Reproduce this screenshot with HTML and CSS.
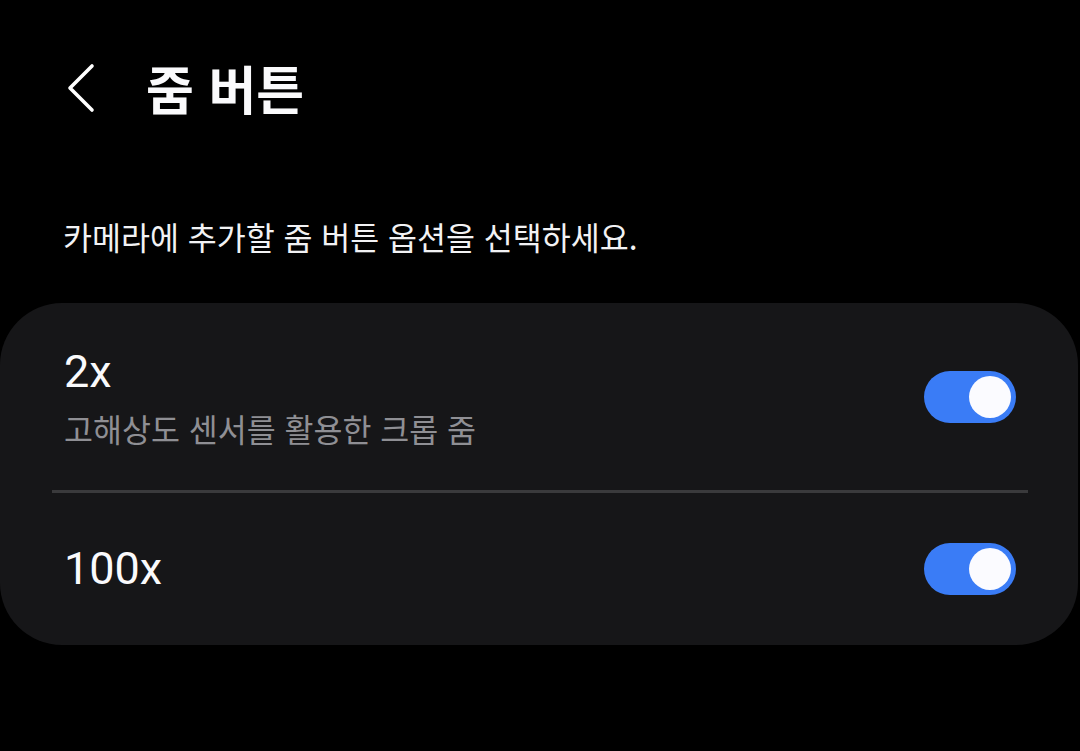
FILE: index.html
```html
<!DOCTYPE html>
<html lang="ko">
<head>
  <meta charset="UTF-8" />
  <meta name="viewport" content="width=device-width, initial-scale=1.0" />
  <title>줌 버튼</title>
  <link rel="stylesheet" href="styles.css">
</head>
<body>
  <header class="top-bar">
    <button class="back-btn" aria-label="뒤로">
      <svg width="30" height="50" viewBox="0 0 30 50">
        <path d="M26 3 L4 25 L26 47" fill="none" stroke="#fff" stroke-width="3.6" stroke-linecap="round" stroke-linejoin="round"/>
      </svg>
    </button>
    <h1>줌 버튼</h1>
  </header>

  <p class="intro">카메라에 추가할 줌 버튼 옵션을 선택하세요.</p>

  <div class="card">
    <div class="row row-first">
      <div class="row-text">
        <div class="row-title">2x</div>
        <div class="row-sub">고해상도 센서를 활용한 크롭 줌</div>
      </div>
      <div class="switch on"><span class="knob"></span></div>
    </div>
    <div class="divider"></div>
    <div class="row row-last">
      <div class="row-text">
        <div class="row-title">100x</div>
      </div>
      <div class="switch on"><span class="knob"></span></div>
    </div>
  </div>
</body>
</html>
```

FILE: styles.css
```css
body {
  margin: 0;
  padding: 0;
  background: #000;
  color: #fafafc;
  font-family: 'Roboto', 'Noto Sans CJK KR', sans-serif;
}

.top-bar {
  display: flex;
  align-items: center;
  height: 60px;
  padding: 58px 0 0 66px;
}

.back-btn {
  background: none;
  border: none;
  padding: 0;
  width: 30px;
  height: 50px;
  display: flex;
  align-items: center;
}

.top-bar h1 {
  margin: 0 0 0 50px;
  font-family: 'Noto Sans CJK KR', sans-serif;
  font-weight: 700;
  font-size: 52px;
  line-height: 60px;
  color: #fafafc;
}

.intro {
  margin: 98px 0 0 63px;
  font-family: 'Noto Sans CJK KR', sans-serif;
  font-size: 31.5px;
  line-height: 40px;
  color: #f2f2f4;
}

.card {
  margin: 47px 2px 0 0;
  background: #161618;
  border-radius: 62px;
}

.row {
  display: flex;
  align-items: center;
  justify-content: space-between;
  padding: 0 62px 0 64px;
}

.row-first {
  height: 187px;
}

.row-first .row-text {
  padding-top: 6px;
}

.row-last {
  height: 152px;
}

.row-title {
  font-size: 45px;
  line-height: 56px;
  color: #fafafc;
}

.row-sub {
  font-family: 'Noto Sans CJK KR', sans-serif;
  font-size: 31.5px;
  line-height: 56px;
  color: #8f8f94;
}

.divider {
  height: 3px;
  margin: 0 50px 0 52px;
  background: #3a3a3c;
}

.switch {
  width: 92px;
  height: 52px;
  border-radius: 26px;
  background: #3a7cf6;
  display: flex;
  align-items: center;
  justify-content: flex-end;
  padding-right: 5px;
  box-sizing: border-box;
}

.knob {
  width: 42px;
  height: 42px;
  border-radius: 50%;
  background: #fbfbff;
}
```
